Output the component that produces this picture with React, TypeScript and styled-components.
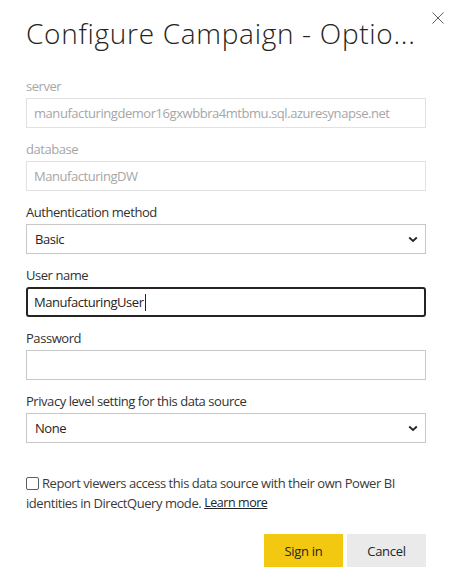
import React from 'react';
import styled, { createGlobalStyle } from 'styled-components';

const GlobalStyle = createGlobalStyle`
  html, body {
    margin: 0;
    padding: 0;
    background: #ffffff;
  }
  body {
    font-family: "Open Sans", "Noto Sans", "Liberation Sans", sans-serif;
    color: #252423;
  }
`;

const Dialog = styled.div`
  width: 454px;
  height: 582px;
  box-sizing: border-box;
  padding: 0 28px 0 26px;
  display: flex;
  flex-direction: column;
  letter-spacing: -0.45px;
`;

const Header = styled.div`
  display: flex;
  justify-content: space-between;
  align-items: flex-start;
  margin-right: -19px;
  padding-top: 15px;
  height: 64px;
  box-sizing: border-box;
`;

const Title = styled.h1`
  margin: 0;
  font-weight: 300;
  font-size: 28px;
  line-height: 36px;
  color: #252423;
  white-space: nowrap;
  letter-spacing: 0.7px;
`;

const CloseButton = styled.button`
  border: none;
  background: transparent;
  padding: 0;
  margin-top: -4px;
  width: 14px;
  height: 14px;
  display: flex;
  align-items: center;
  justify-content: center;
  cursor: pointer;
`;

const Form = styled.div`
  display: flex;
  flex-direction: column;
  gap: 11px;
  margin-top: 12px;
`;

const Field = styled.div`
  display: flex;
  flex-direction: column;
  gap: 2px;
`;

const Label = styled.label<{ disabled?: boolean }>`
  font-size: 13px;
  line-height: 20px;
  color: ${p => (p.disabled ? '#a6a6a6' : '#323130')};
`;

const Input = styled.input`
  box-sizing: border-box;
  width: 400px;
  height: 30px;
  padding: 0 7px;
  font-family: inherit;
  font-size: 13px;
  letter-spacing: -0.45px;
  color: #252423;
  background: #ffffff;
  border: 1px solid #c8c8c8;
  border-radius: 0;
  outline: none;

  &:disabled {
    color: #a6a6a6;
    border-color: #e1e1e1;
  }
`;

const FocusedBox = styled.div`
  box-sizing: border-box;
  width: 400px;
  height: 30px;
  padding: 0 6px;
  display: flex;
  align-items: center;
  font-size: 13px;
  color: #252423;
  border: 2px solid #252423;
  border-radius: 3px;
`;

const Caret = styled.span`
  display: inline-block;
  width: 1px;
  height: 17px;
  background: #252423;
  margin-left: 1px;
`;

const SelectBox = styled.div`
  box-sizing: border-box;
  width: 400px;
  height: 30px;
  padding: 0 7px 0 8px;
  display: flex;
  align-items: center;
  justify-content: space-between;
  font-size: 13px;
  color: #252423;
  border: 1px solid #c8c8c8;
`;

const CheckRow = styled.div`
  margin-top: 30px;
  font-size: 13px;
  line-height: 20px;
  color: #3b3a39;
  width: 380px;
`;

const CheckBox = styled.span`
  display: inline-block;
  box-sizing: border-box;
  width: 13px;
  height: 13px;
  border: 1px solid #605e5c;
  border-radius: 2px;
  vertical-align: -2px;
  margin-right: 3px;
`;

const LearnMore = styled.a`
  color: #252423;
  font-size: 12.5px;
  text-decoration: underline;
  vertical-align: 1px;
  margin-left: 3px;
`;

const Actions = styled.div`
  display: flex;
  justify-content: flex-end;
  gap: 4px;
  margin-top: 21px;
`;

const Button = styled.button<{ primary?: boolean }>`
  width: 79px;
  height: 33px;
  border: none;
  font-family: inherit;
  font-size: 13px;
  letter-spacing: -0.3px;
  color: #252423;
  background: ${p => (p.primary ? '#f2c811' : '#eaeaea')};
  cursor: pointer;
`;

const Chevron = () => (
  <svg width="10" height="7" viewBox="0 0 10 7">
    <path d="M1.2 1.5 L5 5 L8.8 1.5" fill="none" stroke="#252423" strokeWidth="1.8" />
  </svg>
);

export default function App() {
  return (
    <>
      <GlobalStyle />
      <Dialog>
        <Header>
          <Title>Configure Campaign - Optio...</Title>
          <CloseButton aria-label="Close">
            <svg width="12" height="12" viewBox="0 0 12 12">
              <path d="M0.5 0.5 L11.5 11.5 M11.5 0.5 L0.5 11.5" stroke="#605e5c" strokeWidth="1" />
            </svg>
          </CloseButton>
        </Header>
        <Form>
          <Field>
            <Label disabled>server</Label>
            <Input disabled value="manufacturingdemor16gxwbbra4mtbmu.sql.azuresynapse.net" readOnly />
          </Field>
          <Field>
            <Label disabled>database</Label>
            <Input disabled value="ManufacturingDW" readOnly />
          </Field>
          <Field>
            <Label>Authentication method</Label>
            <SelectBox>
              <span>Basic</span>
              <Chevron />
            </SelectBox>
          </Field>
          <Field>
            <Label>User name</Label>
            <FocusedBox>
              <span>ManufacturingUser</span>
              <Caret />
            </FocusedBox>
          </Field>
          <Field>
            <Label>Password</Label>
            <Input type="password" readOnly />
          </Field>
          <Field>
            <Label>Privacy level setting for this data source</Label>
            <SelectBox>
              <span>None</span>
              <Chevron />
            </SelectBox>
          </Field>
        </Form>
        <CheckRow>
          <CheckBox />
          Report viewers access this data source with their own Power BI identities in DirectQuery mode.
          <LearnMore href="#">Learn more</LearnMore>
        </CheckRow>
        <Actions>
          <Button primary>Sign in</Button>
          <Button>Cancel</Button>
        </Actions>
      </Dialog>
    </>
  );
}
